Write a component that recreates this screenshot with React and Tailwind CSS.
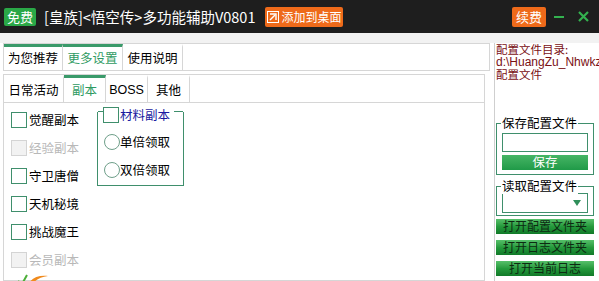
import React from "react";

const FONT = { fontFamily: '"Microsoft YaHei", "Noto Sans CJK SC", "Noto Sans", sans-serif' };

function Check({ label, disabled }) {
  return (
    <div className="flex items-center h-[16px]">
      <span
        className={`w-[16px] h-[16px] border ${
          disabled ? "border-[#d4d4d4] bg-[#f2f2f2]" : "border-[#3f8f6c] bg-white"
        }`}
      />
      <span className={`ml-[2px] text-[12.5px] leading-none ${disabled ? "text-[#b8b8b8]" : "text-black"}`}>
        {label}
      </span>
    </div>
  );
}

function Radio({ label }) {
  return (
    <div className="flex items-center h-[16px]">
      <span className="w-[16px] h-[16px] rounded-full border border-[#6f9f8a] bg-white" />
      <span className="text-[12.5px] leading-none text-black">{label}</span>
    </div>
  );
}

function Tab({ label, active, w }) {
  return (
    <div
      className={`h-full flex items-center justify-center border-r border-[#d6d6d6] text-[12.5px] ${
        active ? "text-[#2e9a62] border-t-[3px] border-t-[#3a9a6a] bg-white" : "text-black border-t-[3px] border-t-transparent"
      } ${w}`}
    >
      {label}
    </div>
  );
}

function GreenBtn({ label }) {
  return (
    <div className="h-[15px] flex items-center justify-center text-[12px] leading-none text-[#0d2a12] bg-gradient-to-b from-[#56c06a] via-[#249a3c] to-[#117a29]">
      {label}
    </div>
  );
}

export default function App() {
  return (
    <div className="w-[599px] h-[281px] overflow-hidden bg-white" style={FONT}>
      {/* title bar */}
      <div className="h-[33px] bg-[#1e1e1e] flex items-center pl-[4px] pr-[10px]">
        <span className="h-[18px] px-[3px] bg-[#2aa847] text-white text-[13px] leading-[18px] rounded-[2px]">免费</span>
        <span className="ml-[8px] text-white text-[14.5px]">[皇族]&lt;悟空传&gt;多功能辅助V0801</span>
        <span className="ml-[10px] h-[20px] px-[2px] flex items-center gap-[2px] bg-[#ee6a1a] text-white text-[12px] rounded-[2px]">
          <svg width="12" height="12" viewBox="0 0 12 12">
            <rect x="0.5" y="0.5" width="11" height="11" fill="none" stroke="white" />
            <path d="M3 3h6v6" fill="none" stroke="white" strokeWidth="1.4" />
            <path d="M3 9l5-5" stroke="white" strokeWidth="1.4" />
          </svg>
          添加到桌面
        </span>
        <div className="flex-1" />
        <span className="h-[20px] px-[4px] flex items-center bg-[#ee6a1a] text-white text-[13px] rounded-[2px]">续费</span>
        <span className="ml-[8px] w-[10px] h-[2px] bg-[#33b24f]" />
        <svg className="ml-[14px]" width="11" height="11" viewBox="0 0 11 11">
          <path d="M1 1l9 9M10 1l-9 9" stroke="#33b24f" strokeWidth="2.2" />
        </svg>
      </div>
      <div className="h-[10px] bg-[#f2f2f2]" />

      <div className="flex h-[238px]">
        {/* left panel */}
        <div className="w-[490px] pl-[3px] flex flex-col">
          <div className="h-[28px] flex border-t border-b border-[#d6d6d6]">
            <div className="w-[1px] bg-[#d6d6d6]" />
            <Tab label="为您推荐" active w="w-[59px] text-black!" />
            <Tab label="更多设置" active w="w-[60px]" />
            <Tab label="使用说明" w="w-[60px]" />
            <div className="flex-1 border-r border-[#d6d6d6]" />
          </div>
          <div className="flex-1 border-l border-[#d6d6d6] mt-[3px] flex flex-col relative">
            <div className="h-[29px] flex border-t border-b border-[#d6d6d6] mr-[5px]">
              <Tab label="日常活动" w="w-[60px]" />
              <Tab label="副本" active w="w-[42px]" />
              <Tab label="BOSS" w="w-[42px] font-['Liberation_Sans']" />
              <Tab label="其他" w="w-[42px]" />
              <div className="flex-1 border-r border-[#d6d6d6]" />
            </div>
            <div className="flex-1 flex mr-[5px] border-r border-[#d6d6d6] border-b">
              <div className="pl-[7px] pt-[9px] flex flex-col gap-[12px] w-[93px]">
                <Check label="觉醒副本" />
                <Check label="经验副本" disabled />
                <Check label="守卫唐僧" />
                <Check label="天机秘境" />
                <Check label="挑战魔王" />
                <Check label="会员副本" disabled />
              </div>
              <div className="mt-[9px] w-[87px] h-[74px] border border-[#3f8f6c] border-t-0 relative">
                <div className="absolute -top-[1px] left-0 right-0 h-[1px] bg-[#3f8f6c]" />
                <div className="absolute -top-[5px] left-[5px] pr-[4px] bg-white flex items-center">
                  <span className="w-[16px] h-[16px] border border-[#3f8f6c] bg-white" />
                  <span className="ml-[1px] text-[12.5px] leading-none text-[#1a1aa0]">材料副本</span>
                </div>
                <div className="pl-[6px] pt-[22px] flex flex-col gap-[12px]">
                  <Radio label="单倍领取" />
                  <Radio label="双倍领取" />
                </div>
              </div>
            </div>
            <svg className="absolute left-[12px] bottom-[-4px]" width="40" height="12" viewBox="0 0 40 12">
              <path d="M2 8l4 3 5-9" fill="none" stroke="#4caf3a" strokeWidth="2" />
              <path d="M12 12c3-7 10-10 20-9-8 1-13 4-16 9z" fill="#f08a1c" />
            </svg>
          </div>
        </div>

        {/* right panel */}
        <div className="flex-1 min-w-0 border-l border-[#cfcfcf] ml-[4px] pl-[1px] flex flex-col">
          <div className="text-[11.5px] leading-[12.5px] text-[#7a0f14] whitespace-nowrap">
            <div className="h-[12.5px]">配置文件目录:</div>
            <div className="h-[12.5px] font-['Liberation_Sans'] text-[12px]">d:\HuangZu_Nhwkz</div>
            <div className="h-[12.5px]">配置文件</div>
          </div>
          <div className="mt-[42px] mr-[5px] border border-[#3f8f6c] border-t-0 relative h-[52px]">
            <div className="absolute top-0 left-0 right-0 h-[1px] bg-[#3f8f6c]" />
            <div className="absolute -top-[8px] left-[4px] px-[1px] bg-white text-[12.5px] leading-[16px] text-black">保存配置文件</div>
            <div className="mx-[5px] mt-[10px] h-[19px] border border-[#3f8f6c] bg-white" />
            <div className="mx-[5px] mt-[3px] h-[15px] flex items-center justify-center text-white text-[12.5px] bg-gradient-to-b from-[#45b565] to-[#1f9a48]">保存</div>
          </div>
          <div className="mt-[11px] mr-[5px] border border-[#3f8f6c] border-t-0 relative h-[30px]">
            <div className="absolute top-0 left-0 right-0 h-[1px] bg-[#3f8f6c]" />
            <div className="absolute -top-[8px] left-[4px] px-[1px] bg-white text-[12.5px] leading-[16px] text-black">读取配置文件</div>
            <div className="mx-[5px] mt-[7px] h-[20px] border border-[#3f8f6c] bg-white flex items-center justify-end pr-[6px]">
              <svg width="8" height="6" viewBox="0 0 8 6">
                <path d="M0 0h8L4 6z" fill="#2f8f5a" />
              </svg>
            </div>
          </div>
          <div className="mt-[3px] mr-[5px] flex flex-col gap-[6px]">
            <GreenBtn label="打开配置文件夹" />
            <GreenBtn label="打开日志文件夹" />
            <GreenBtn label="打开当前日志" />
          </div>
        </div>
      </div>
    </div>
  );
}
